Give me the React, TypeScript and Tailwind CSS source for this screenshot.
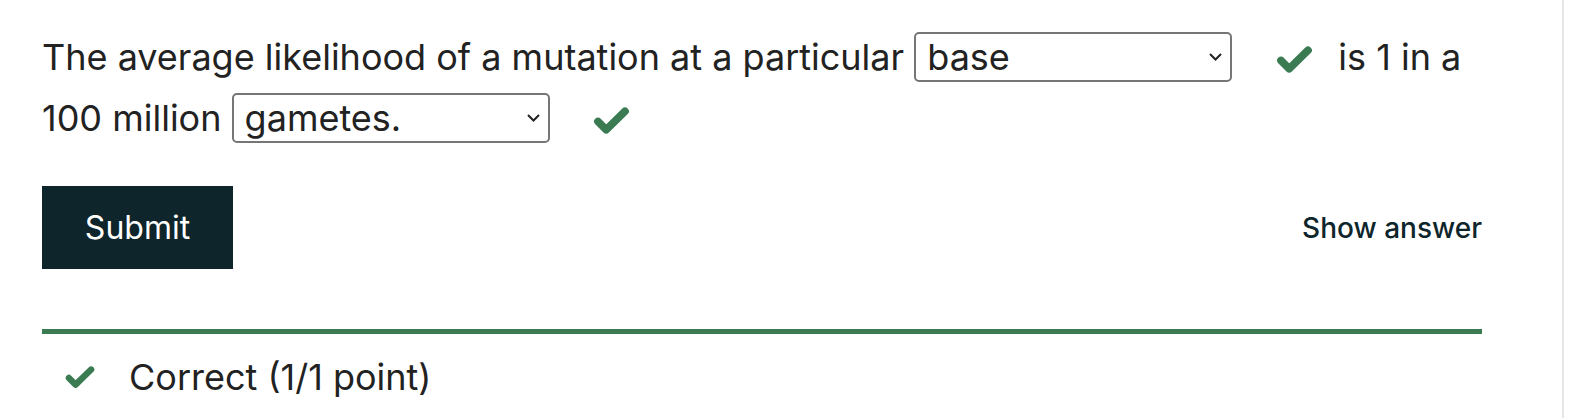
const font = { fontFamily: "Inter, 'Noto Sans', sans-serif" };

const Check = ({ className = "" }: { className?: string }) => (
  <svg
    viewBox="0 0 38 29"
    className={className}
    fill="none"
    stroke="#3a7b52"
    strokeWidth={8}
    strokeLinecap="round"
    strokeLinejoin="round"
  >
    <polyline points="5,15 13.5,23.5 33,4.5" />
  </svg>
);

const Dropdown = ({ value }: { value: string }) => (
  <span className="inline-flex h-[50px] w-[318px] items-center justify-between rounded-[5px] border-2 border-[#767676] pl-[11px] pr-[8px] leading-[46px]">
    <span>{value}</span>
    <svg viewBox="0 0 13 8" className="h-[8px] w-[13px]" fill="none" stroke="#222" strokeWidth={2}>
      <path d="M1 1 L6.5 6.5 L12 1" />
    </svg>
  </span>
);

export default function App() {
  return (
    <div className="flex h-[418px] w-[1564px] border-r-2 border-[#e6e6e6] bg-white text-[#222]" style={font}>
      <div className="w-[1440px] ml-[42px] pt-[27px]">
        <p className="text-[36px] leading-[61px]">
          The average likelihood of a mutation at a particular <Dropdown value="base" />
          <Check className="ml-[44px] mr-[15px] inline-block h-[28px] w-[37px]" /> is 1 in a 100 million{" "}
          <Dropdown value="gametes." />
          <Check className="ml-[43px] inline-block h-[28px] w-[37px]" />
        </p>

        <div className="mt-[37px] flex items-center justify-between">
          <button className="h-[83px] w-[191px] bg-[#0e252b] text-[32px] text-white">Submit</button>
          <button className="text-[28px] font-medium text-[#0e252b]">Show answer</button>
        </div>

        <div className="mt-[60px] h-[5px] w-full bg-[#3a7b52]" />

        <div className="mt-[13px] flex items-center text-[36px] leading-[61px]">
          <Check className="ml-[22px] h-[23px] w-[32px]" />
          <span className="ml-[33px]">Correct (1/1 point)</span>
        </div>
      </div>
    </div>
  );
}
